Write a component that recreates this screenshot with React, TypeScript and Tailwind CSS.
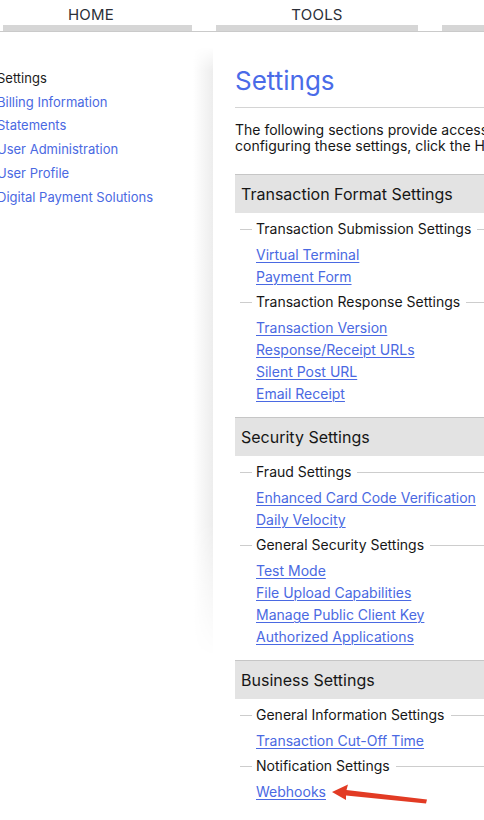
import React from "react";

type Group = { legend: string; links: string[] };
type Section = { title: string; groups: Group[] };

const sections: Section[] = [
  {
    title: "Transaction Format Settings",
    groups: [
      { legend: "Transaction Submission Settings", links: ["Virtual Terminal", "Payment Form"] },
      {
        legend: "Transaction Response Settings",
        links: ["Transaction Version", "Response/Receipt URLs", "Silent Post URL", "Email Receipt"],
      },
    ],
  },
  {
    title: "Security Settings",
    groups: [
      { legend: "Fraud Settings", links: ["Enhanced Card Code Verification", "Daily Velocity"] },
      {
        legend: "General Security Settings",
        links: ["Test Mode", "File Upload Capabilities", "Manage Public Client Key", "Authorized Applications"],
      },
    ],
  },
  {
    title: "Business Settings",
    groups: [
      { legend: "General Information Settings", links: ["Transaction Cut-Off Time"] },
      { legend: "Notification Settings", links: ["Webhooks"] },
    ],
  },
];

const sideNav = [
  "Billing Information",
  "Statements",
  "User Administration",
  "User Profile",
  "Digital Payment Solutions",
];

function Tab({ label, first }: { label: string; first?: boolean }) {
  return (
    <div className="w-[202px] shrink-0 flex flex-col">
      <div className="h-[25px] pt-[5px] leading-[20px] text-center text-[15px] text-[#2b2f38] tracking-[0.2px]">
        {label}
      </div>
      <div className={"h-[6px] bg-[#d6d6d6] " + (first ? "ml-[13px]" : "")} />
    </div>
  );
}

function GroupBlock({ group, index }: { group: Group; index: number }) {
  return (
    <div className={index === 0 ? "mt-[6px]" : "mt-[4px]"}>
      <div className="flex items-center h-[20px]">
        <div className="ml-[5px] w-[12px] h-px bg-[#cdcdcd]" />
        <div className="ml-[4px] text-[14px] leading-[20px] text-[#161616] whitespace-nowrap">{group.legend}</div>
        <div className="ml-[6px] flex-1 h-px bg-[#cdcdcd]" />
      </div>
      <div className="mt-[5px] pl-[21px] flex flex-col">
        {group.links.map((l) => (
          <a
            key={l}
            href="#"
            className="h-[22px] leading-[22px] text-[14px] text-[#4a69e2] underline decoration-1 underline-offset-2 whitespace-nowrap w-fit"
          >
            {l}
          </a>
        ))}
      </div>
    </div>
  );
}

export default function App() {
  return (
    <div
      className="relative w-[484px] h-[820px] overflow-hidden bg-white"
      style={{ fontFamily: "Inter, 'Noto Sans', Arial, sans-serif" }}
    >
      {/* top navigation tabs */}
      <div className="flex gap-[24px] ml-[-10px]">
        <Tab label="HOME" first />
        <Tab label="TOOLS" />
        <Tab label="REPORTS" />
      </div>
      <div className="h-px bg-[#cacaca]" />

      <div className="flex">
        {/* left menu */}
        <div className="w-[193px] shrink-0 pt-[35px] ml-[-3px]">
          <div className="text-[13px] leading-[23.7px] text-[#1a1a1a] whitespace-nowrap">Settings</div>
          {sideNav.map((s) => (
            <a key={s} href="#" className="block text-[13px] leading-[23.7px] text-[#4a69e2] whitespace-nowrap">
              {s}
            </a>
          ))}
        </div>

        {/* panel edge shading */}
        <div className="w-[20px] shrink-0 mt-[15px] h-[610px] ml-[3px] bg-gradient-to-r from-white to-[#ededed] [mask-image:linear-gradient(to_bottom,transparent,black_4%,black_78%,transparent)]" />

        {/* main content */}
        <div className="w-[700px] shrink-0 pl-[22px]">
          <h1 className="pt-[33px] text-[26px] leading-[32px] text-[#4a6be8] font-normal">Settings</h1>
          <div className="mt-[10px] h-px bg-[#d4d4d4]" />
          <p className="mt-[14px] text-[14px] leading-[16px] text-[#161616] whitespace-nowrap">
            The following sections provide access to all of the settings for your payment gateway account. For help
            <br />
            configuring these settings, click the Help link at the top of any settings page.
          </p>

          <div className="mt-[20px]">
            {sections.map((sec) => (
              <div key={sec.title} className="mb-[12px]">
                <div className="border-t border-[#c6c6c6] h-[39px] bg-[#e3e3e3] flex items-center pl-[6px] text-[16px] text-[#161616]">
                  {sec.title}
                </div>
                {sec.groups.map((g, i) => (
                  <GroupBlock key={g.legend} group={g} index={i} />
                ))}
              </div>
            ))}
          </div>
        </div>
      </div>

      {/* red pointer arrow */}
      <svg className="absolute left-0 top-0 pointer-events-none" width="484" height="820" viewBox="0 0 484 820">
        <polygon points="332,792 348,784.5 346.5,790 427,799.5 426,803.5 346,795.5 346,800" fill="#e23b24" />
      </svg>
    </div>
  );
}
